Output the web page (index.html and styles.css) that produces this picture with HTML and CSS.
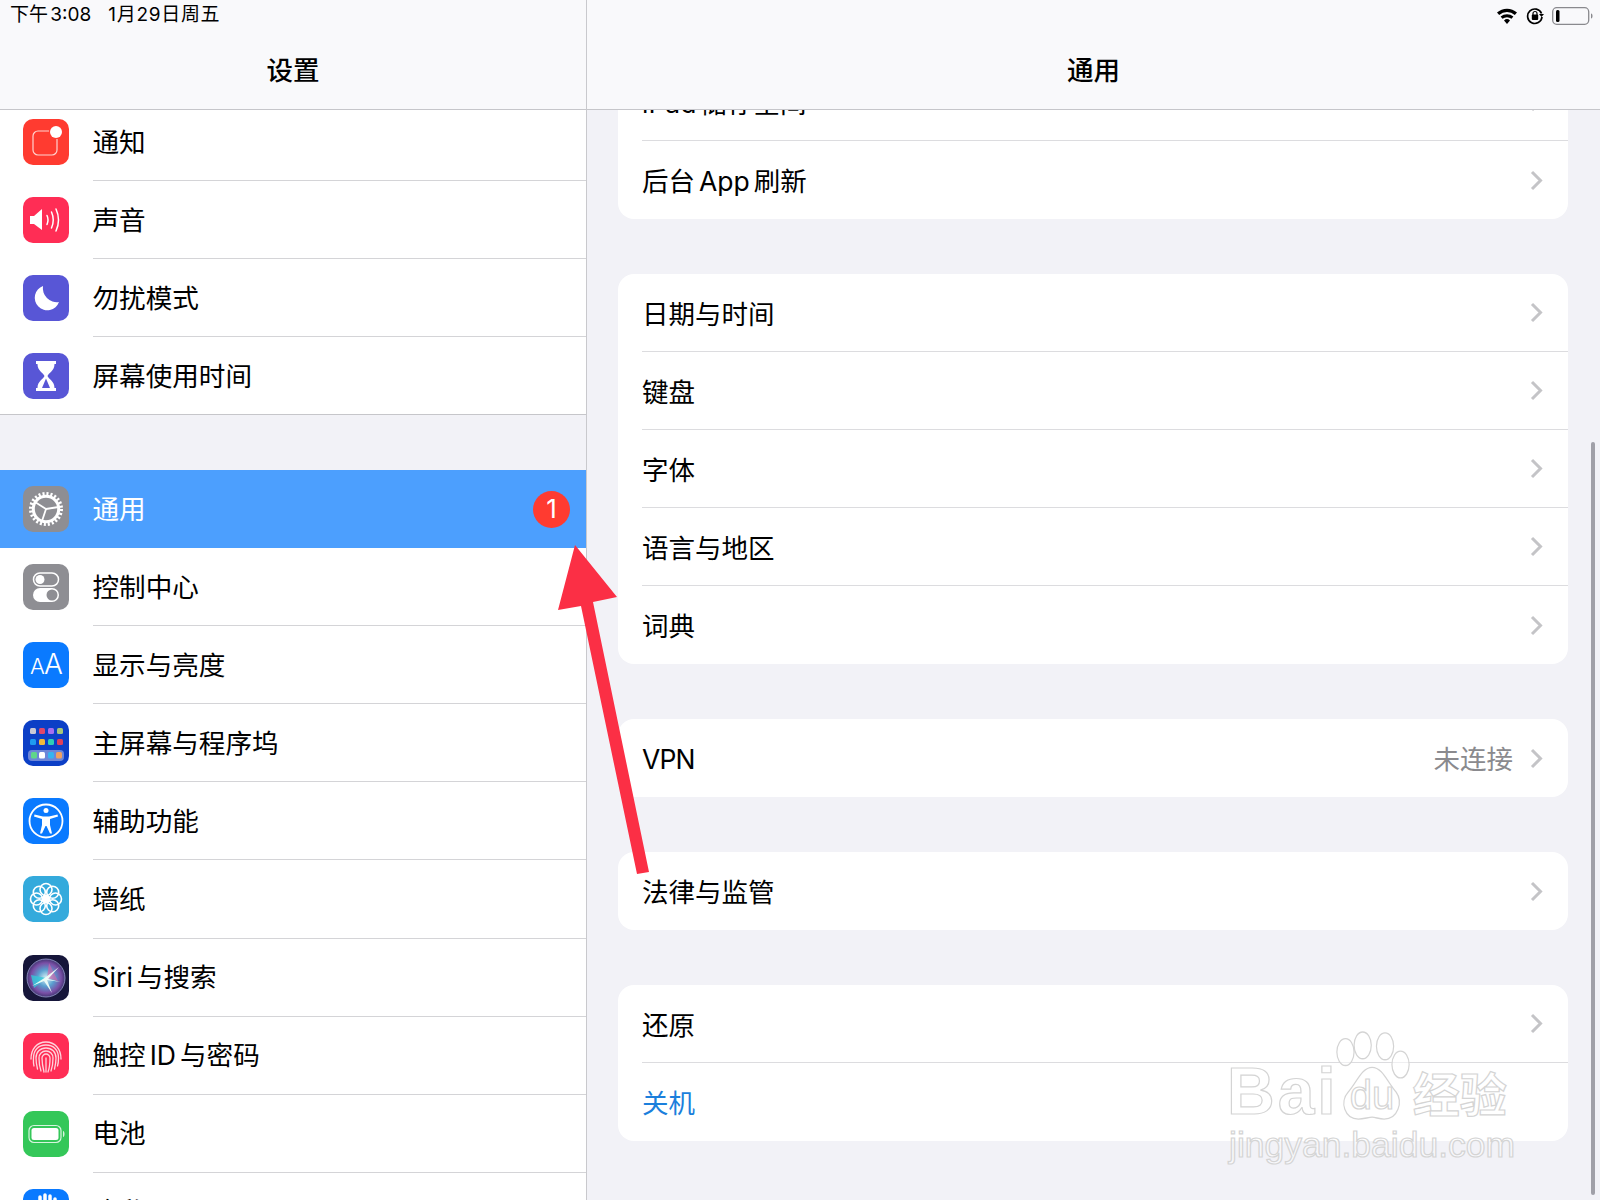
FILE: index.html
```html
<!DOCTYPE html>
<html lang="zh-CN">
<head>
<meta charset="utf-8">
<title>设置</title>
<link rel="stylesheet" href="styles.css">
</head>
<body>
<div class="app">
  <aside class="sidebar">
    <header class="navbar">
      <div class="status status-left"><span class="time">下午 3:08</span><span class="date">1月29日周五</span></div>
      <h1 class="title">设置</h1>
    </header>
    <div class="side-scroll">
      <ul class="side-group side-group-first">
        <li class="side-row">
          <svg class="icon" viewBox="0 0 46 46"><rect class="ic-bg" width="46" height="46" rx="10" fill="#ff3b30"/><path d="M26 12H15a5 5 0 0 0-5 5v14a5 5 0 0 0 5 5h14a5 5 0 0 0 5-5V20" fill="none" stroke="#ffd3cf" stroke-width="1.200"/><circle cx="33" cy="13" r="6" fill="#fff"/></svg>
          <div class="row-body"><span>通知</span></div>
        </li>
        <li class="side-row">
          <svg class="icon" viewBox="0 0 46 46"><rect width="46" height="46" rx="10" fill="#ff2d55"/><path d="M7 19h4l8-7v21l-8-6H7z" fill="#fff"/><path d="M24 18.500q2 4 0 9M28.500 15q3.500 8 0 16M33 12q5 11 0 22" fill="none" stroke="#fff" stroke-width="1.500" stroke-linecap="round"/></svg>
          <div class="row-body"><span>声音</span></div>
        </li>
        <li class="side-row">
          <svg class="icon" viewBox="0 0 46 46"><rect width="46" height="46" rx="10" fill="#5856d6"/><path d="M20 11a12.500 12.500 0 1 0 16 16A14 14 0 0 1 20 11z" fill="#fff"/></svg>
          <div class="row-body"><span>勿扰模式</span></div>
        </li>
        <li class="side-row side-row-last">
          <svg class="icon" viewBox="0 0 46 46"><rect width="46" height="46" rx="10" fill="#5856d6"/><path d="M13 8h20v3h-1.500c0 7-6 9-7 12 1 3 7 5 7 12H33v3H13v-3h1.500c0-7 6-9 7-12-1-3-7-5-7-12H13z" fill="#fff"/><path d="M23 25.500l-4 9.500h8z" fill="#5856d6"/></svg>
          <div class="row-body"><span>屏幕使用时间</span></div>
        </li>
      </ul>
      <ul class="side-group">
        <li class="side-row side-row-active">
          <svg class="icon" viewBox="0 0 46 46"><rect width="46" height="46" rx="10" fill="#8e8e93"/><circle cx="23" cy="23" r="12.700" fill="none" stroke="#fff" stroke-width="3"/><circle cx="23" cy="23" r="15" fill="none" stroke="#fff" stroke-width="4" stroke-dasharray="2 1.927"/><path d="M23 23L12 16M23 23l12.500-2M23 23l-4 12" stroke="#fff" stroke-width="1.800"/></svg>
          <div class="row-body"><span>通用</span><span class="badge">1</span></div>
        </li>
        <li class="side-row">
          <svg class="icon" viewBox="0 0 46 46"><rect width="46" height="46" rx="10" fill="#8e8e93"/><rect x="10.500" y="9" width="25" height="13" rx="6.500" fill="none" stroke="#fff" stroke-width="1.500"/><circle cx="17" cy="15.500" r="4.500" fill="#fff"/><rect x="10" y="24" width="26" height="14" rx="7" fill="#fff"/><circle cx="29" cy="31" r="5.500" fill="#8e8e93"/></svg>
          <div class="row-body"><span>控制中心</span></div>
        </li>
        <li class="side-row">
          <svg class="icon" viewBox="0 0 46 46"><rect width="46" height="46" rx="10" fill="#0a7aff"/><text class="aa-small" x="7" y="32">A</text><text class="aa-large" x="21" y="32">A</text></svg>
          <div class="row-body"><span>显示与亮度</span></div>
        </li>
        <li class="side-row">
          <svg class="icon" viewBox="0 0 46 46"><rect width="46" height="46" rx="10" fill="#0c3fc6"/><rect x="7" y="8" width="6" height="6" rx="1.500" fill="#c9c9d6"/><rect x="16" y="8" width="6" height="6" rx="1.500" fill="#e0476a"/><rect x="25" y="8" width="6" height="6" rx="1.500" fill="#a56ef0"/><rect x="34" y="8" width="6" height="6" rx="1.500" fill="#a6c77a"/><rect x="7" y="19" width="6" height="6" rx="1.500" fill="#1e9bf0"/><rect x="16" y="19" width="6" height="6" rx="1.500" fill="#f0b93a"/><rect x="25" y="19" width="6" height="6" rx="1.500" fill="#2ecfb5"/><rect x="34" y="19" width="6" height="6" rx="1.500" fill="#e0405a"/><rect x="5" y="30" width="36" height="11" rx="4" fill="#6c86d8"/><rect x="8" y="32" width="6" height="6.500" rx="1.500" fill="#5fd68a"/><rect x="16" y="32" width="6" height="6.500" rx="1.500" fill="#fff"/><rect x="25" y="32" width="6" height="6.500" rx="1.500" fill="#35b4f0"/><rect x="33" y="32" width="6" height="6.500" rx="1.500" fill="#f0a060"/></svg>
          <div class="row-body"><span>主屏幕与程序坞</span></div>
        </li>
        <li class="side-row">
          <svg class="icon" viewBox="0 0 46 46"><rect width="46" height="46" rx="10" fill="#0a7aff"/><circle cx="23" cy="23" r="16.500" fill="none" stroke="#fff" stroke-width="1.800"/><circle cx="23" cy="12.500" r="2.500" fill="#fff"/><path d="M11.500 16.500L20 18.500H26L34.500 16.500L35 18.500L27 21V27L29 35.500H27L23.500 28H22.500L19 35.500H17L19 27V21L11 18.500z" fill="#fff"/></svg>
          <div class="row-body"><span>辅助功能</span></div>
        </li>
        <li class="side-row">
          <svg class="icon" viewBox="0 0 46 46"><rect width="46" height="46" rx="10" fill="#34aadc"/><g fill="none" stroke="#fff" stroke-width="1.600"><circle cx="23" cy="23" r="3" fill="#fff"/><circle cx="23" cy="13.500" r="6"/><circle cx="23" cy="32.500" r="6"/><circle cx="13.500" cy="23" r="6"/><circle cx="32.500" cy="23" r="6"/><circle cx="16.300" cy="16.300" r="6"/><circle cx="29.700" cy="16.300" r="6"/><circle cx="16.300" cy="29.700" r="6"/><circle cx="29.700" cy="29.700" r="6"/></g></svg>
          <div class="row-body"><span>墙纸</span></div>
        </li>
        <li class="side-row">
          <svg class="icon" viewBox="0 0 46 46"><defs><radialGradient id="siri" cx="50%" cy="50%" r="55%"><stop offset="0" stop-color="#d8f4f4"/><stop offset=".4" stop-color="#5a9fd0"/><stop offset=".72" stop-color="#7a4fa6"/><stop offset="1" stop-color="#2a2a5c"/></radialGradient></defs><rect width="46" height="46" rx="10" fill="#16163a"/><circle cx="23" cy="23" r="19" fill="url(#siri)" stroke="#9aa0d0" stroke-width=".8"/><path d="M8 20l15 3-12 10z" fill="#35c8d8" opacity=".8"/><path d="M26 8l-2 15 11 3z" fill="#e060a8" opacity=".6"/><path d="M9 31L23 22 36 12 25 24 38 27 24 25 29 38 21 26z" fill="#effdf8" opacity=".95"/></svg>
          <div class="row-body"><span>Siri 与搜索</span></div>
        </li>
        <li class="side-row">
          <svg class="icon" viewBox="0 0 46 46"><rect width="46" height="46" rx="10" fill="#ff2d55"/><g fill="none" stroke="#ffd5dd" stroke-width="1.300" stroke-linecap="round"><path d="M8 26c0-10 6-17 15-17s15 7 15 17"/><path d="M11 33c-1-3-.5-6-.5-8 0-8 5-13 12.500-13s12.500 5 12.500 13c0 2 0 5-1 8"/><path d="M14.500 36c-1-4-1.500-7-1.500-11 0-6 4-10 10-10s10 4 10 10c0 4-.5 7-1.500 11"/><path d="M18 38c-1.500-4-2-8-2-13 0-4 3-7 7-7s7 3 7 7c0 5-.5 9-2 13"/><path d="M21 39c-1-4-2-9-2-14 0-2 2-4 4-4s4 2 4 4c0 5-.5 10-2 14"/><path d="M23 25c0 5 0 10 0 14"/></g></svg>
          <div class="row-body"><span>触控 ID 与密码</span></div>
        </li>
        <li class="side-row">
          <svg class="icon" viewBox="0 0 46 46"><rect width="46" height="46" rx="10" fill="#34c759"/><rect x="6" y="14.500" width="32" height="17" rx="5" fill="none" stroke="#fff" stroke-width="1.200" opacity=".8"/><rect x="8.500" y="17" width="27" height="12" rx="2.500" fill="#fff"/><path d="M40 20v6c1 0 1.500-1.500 1.500-3s-.5-3-1.500-3z" fill="#fff" opacity=".8"/></svg>
          <div class="row-body"><span>电池</span></div>
        </li>
        <li class="side-row">
          <svg class="icon" viewBox="0 0 46 46"><rect width="46" height="46" rx="10" fill="#0a7aff"/><path d="M17 8v12M22 6v14M27 7v13M32 10v11" stroke="#fff" stroke-width="3.500" stroke-linecap="round"/><path d="M15 18h19v10c0 6-4 10-9 10s-10-5-12-10z" fill="#fff"/></svg>
          <div class="row-body"><span>隐私</span></div>
        </li>
      </ul>
    </div>
  </aside>

  <main class="detail">
    <header class="navbar">
      <div class="status status-right">
        <svg class="st-wifi" viewBox="0 0 22 16"><path d="M11 16l-3-3.600a4.500 4.500 0 0 1 6 0zM6.500 10.800L4.600 8.600a9.800 9.800 0 0 1 12.800 0l-1.900 2.200a7 7 0 0 0-9 0zM3.200 7L1 4.600a15 15 0 0 1 20 0L18.800 7a12 12 0 0 0-15.600 0z" fill="#000"/></svg>
        <svg class="st-lock" viewBox="0 0 18 18"><path d="M15.500 6.500A7.200 7.200 0 1 0 16 10" fill="none" stroke="#000" stroke-width="1.700"/><path d="M13 7h5l-2.500 3z" fill="#000"/><rect x="5.800" y="7.500" width="6.400" height="5.500" rx="1" fill="#000"/><path d="M7 8V6.500a2 2 0 0 1 4 0V8" fill="none" stroke="#000" stroke-width="1.200"/></svg>
        <svg class="st-batt" viewBox="0 0 42 18"><rect x=".7" y=".7" width="36" height="16.600" rx="4" fill="none" stroke="#8a8a8e" stroke-width="1.300"/><rect x="4" y="3" width="3.500" height="12" rx="1.500" fill="#000"/><path d="M39 6.500v5c1 0 1.500-1 1.500-2.500s-.5-2.500-1.500-2.500z" fill="#8a8a8e"/></svg>
      </div>
      <h1 class="title">通用</h1>
    </header>
    <div class="detail-scroll">
      <section class="card card-first">
        <div class="row"><span>iPad 储存空间</span><svg class="chev" viewBox="0 0 13 21"><path d="M2 2l8.500 8.500L2 19"/></svg></div>
        <div class="row"><span>后台 App 刷新</span><svg class="chev" viewBox="0 0 13 21"><path d="M2 2l8.500 8.500L2 19"/></svg></div>
      </section>
      <section class="card">
        <div class="row"><span>日期与时间</span><svg class="chev" viewBox="0 0 13 21"><path d="M2 2l8.500 8.500L2 19"/></svg></div>
        <div class="row"><span>键盘</span><svg class="chev" viewBox="0 0 13 21"><path d="M2 2l8.500 8.500L2 19"/></svg></div>
        <div class="row"><span>字体</span><svg class="chev" viewBox="0 0 13 21"><path d="M2 2l8.500 8.500L2 19"/></svg></div>
        <div class="row"><span>语言与地区</span><svg class="chev" viewBox="0 0 13 21"><path d="M2 2l8.500 8.500L2 19"/></svg></div>
        <div class="row"><span>词典</span><svg class="chev" viewBox="0 0 13 21"><path d="M2 2l8.500 8.500L2 19"/></svg></div>
      </section>
      <section class="card">
        <div class="row"><span class="latin">VPN</span><span class="value">未连接</span><svg class="chev" viewBox="0 0 13 21"><path d="M2 2l8.500 8.500L2 19"/></svg></div>
      </section>
      <section class="card">
        <div class="row"><span>法律与监管</span><svg class="chev" viewBox="0 0 13 21"><path d="M2 2l8.500 8.500L2 19"/></svg></div>
      </section>
      <section class="card">
        <div class="row"><span>还原</span><svg class="chev" viewBox="0 0 13 21"><path d="M2 2l8.500 8.500L2 19"/></svg></div>
        <div class="row"><span class="link">关机</span></div>
      </section>
    </div>
    <div class="scrollbar"></div>
  </main>

  <svg class="arrow" viewBox="0 0 1600 1200"><path d="M575 545L617 597 593 602 649 872 637 874 581 606 558 610z" fill="#fb2f45"/></svg>

  <div class="watermark">
    <div class="wm-top">
      <span class="wm-bai">Bai</span>
      <span class="wm-paw">
        <svg viewBox="0 0 86 94" preserveAspectRatio="none"><g fill="rgba(255,255,255,.55)" stroke="#d4d4d4" stroke-width="1.400"><ellipse cx="11" cy="22" rx="10" ry="14"/><ellipse cx="31" cy="15" rx="10" ry="14"/><ellipse cx="57" cy="16" rx="10" ry="14"/><ellipse cx="75" cy="35" rx="10" ry="14"/><path d="M42 38c12 0 18 16 28 26 8 10 2 28-14 28-6 0-10-2-14-2s-10 2-16 2C10 92 4 74 14 64c10-10 16-26 28-26z"/></g></svg>
        <span class="wm-du">du</span>
      </span>
      <span class="wm-cn">经验</span>
    </div>
    <div class="wm-url">jingyan.baidu.com</div>
  </div>
</div>
</body>
</html>
```
FILE: styles.css
```css
* { box-sizing: border-box; }
html, body { margin: 0; padding: 0; height: 100%; }
body {
  font-family: Inter, "Noto Sans CJK SC", sans-serif;
  color: #000;
  background: #f2f2f7;
  overflow: hidden;
}
ul { list-style: none; margin: 0; padding: 0; }
.app {
  position: relative;
  display: grid;
  grid-template-columns: 587px 1fr;
  width: 100%;
  height: 1200px;
  overflow: hidden;
}
.sidebar {
  display: flex;
  flex-direction: column;
  min-width: 0;
  height: 100%;
  border-right: 1px solid #c9c9cd;
  background: #f2f2f7;
}
.detail {
  position: relative;
  display: flex;
  flex-direction: column;
  min-width: 0;
  height: 100%;
  background: #f2f2f7;
}
.navbar {
  position: relative;
  z-index: 2;
  flex: none;
  height: 110px;
  background: #f9f9fb;
  border-bottom: 1px solid #c6c6ca;
}
.title {
  margin: 0;
  padding-top: 50px;
  font-size: 26.5px;
  line-height: 40px;
  font-weight: 500;
  text-align: center;
}
.status {
  position: absolute;
  top: 0;
  display: flex;
  align-items: center;
  font-size: 19px;
  line-height: 30px;
}
.status-left { left: 10px; }
.time { word-spacing: -3px; }
.date { margin-left: 17px; letter-spacing: .7px; }
.status-right { right: 7px; top: 6px; gap: 8px; height: 20px; }
.st-wifi { width: 22px; height: 16px; }
.st-lock { width: 18px; height: 18px; }
.st-batt { width: 42px; height: 18px; margin-right: -1px; }

.side-scroll { flex: 1; min-height: 0; overflow: hidden; margin-top: -7px; }
.side-group { background: #fff; margin-bottom: 54.6px; }
.side-row {
  display: flex;
  align-items: center;
  height: 78.1px;
  padding-left: 23px;
  gap: 23.5px;
  font-size: 26.6px;
  line-height: 36px;
  word-spacing: -3.5px;
}
.side-row-last { border-bottom: 1px solid #c6c6ca; }
.icon { flex: none; width: 46px; height: 46px; }
.row-body {
  flex: 1;
  display: flex;
  align-items: center;
  justify-content: space-between;
  height: 100%;
  padding-right: 16px;
  border-bottom: 1px solid #d4d4d7;
}
.side-row-last .row-body { border-bottom: 0; }
.side-row-active { background: #4c9ffe; color: #fff; }
.side-row-active .row-body { border-bottom: 0; }
.badge {
  display: flex;
  align-items: center;
  justify-content: center;
  width: 37px;
  height: 37px;
  border-radius: 50%;
  background: #ff3b30;
  font-size: 26px;
  line-height: 1;
}
.aa-small { font-size: 22px; fill: #fff; font-family: Inter, sans-serif; font-weight: 300; }
.aa-large { font-size: 28px; fill: #fff; font-family: Inter, sans-serif; font-weight: 300; }

.detail-scroll {
  flex: 1;
  min-height: 0;
  overflow: hidden;
  padding: 0 32px 0 31px;
}
.card {
  background: #fff;
  border-radius: 16px;
  margin-bottom: 55px;
  padding-left: 24px;
}
.card-first { margin-top: -47px; }
.row {
  display: flex;
  align-items: center;
  height: 78px;
  padding-right: 25px;
  font-size: 26.5px;
  line-height: 36px;
  word-spacing: -3.5px;
  border-bottom: 1px solid #dcdcdf;
}
.row:last-child { border-bottom: 0; }
.row > span { margin-top: 2px; }
.row > span:first-child { flex: 1; }
.latin { letter-spacing: -.8px; }
.value { color: #8a8a8e; margin-right: 17px; }
.link { color: #1b7fdc; }
.chev { flex: none; width: 13px; height: 21px; fill: none; stroke: #c4c4c7; stroke-width: 3; }

.scrollbar {
  position: absolute;
  top: 442px;
  right: 5px;
  width: 4px;
  height: 753px;
  border-radius: 2px;
  background: #a0a0a8;
}
.arrow {
  position: absolute;
  left: 0;
  top: 0;
  width: 1600px;
  height: 1200px;
  z-index: 3;
  pointer-events: none;
}
.watermark {
  position: absolute;
  left: 1227px;
  top: 1031px;
  width: 290px;
  z-index: 4;
  pointer-events: none;
}
.wm-top { display: flex; align-items: flex-end; height: 90px; }
.wm-bai, .wm-cn, .wm-url, .wm-du {
  color: rgba(255, 255, 255, .55);
  -webkit-text-stroke: 1.2px #d4d4d4;
  font-family: "Liberation Sans", "Noto Sans CJK SC", sans-serif;
}
.wm-bai { font-size: 66px; line-height: 66px; font-weight: 700; letter-spacing: 3px; margin-bottom: -3px; }
.wm-paw { position: relative; display: block; flex: none; width: 74px; height: 90px; margin-left: -3px; }
.wm-paw svg { display: block; width: 74px; height: 90px; }
.wm-du {
  position: absolute;
  left: 14px;
  top: 42px;
  font-size: 40px;
  line-height: 44px;
}
.wm-cn { font-size: 47px; line-height: 52px; font-weight: 700; margin-left: 3px; margin-bottom: -1px; }
.wm-url { font-size: 35.500px; line-height: 42px; margin-top: 3px; margin-left: 2px; white-space: nowrap; }
```
